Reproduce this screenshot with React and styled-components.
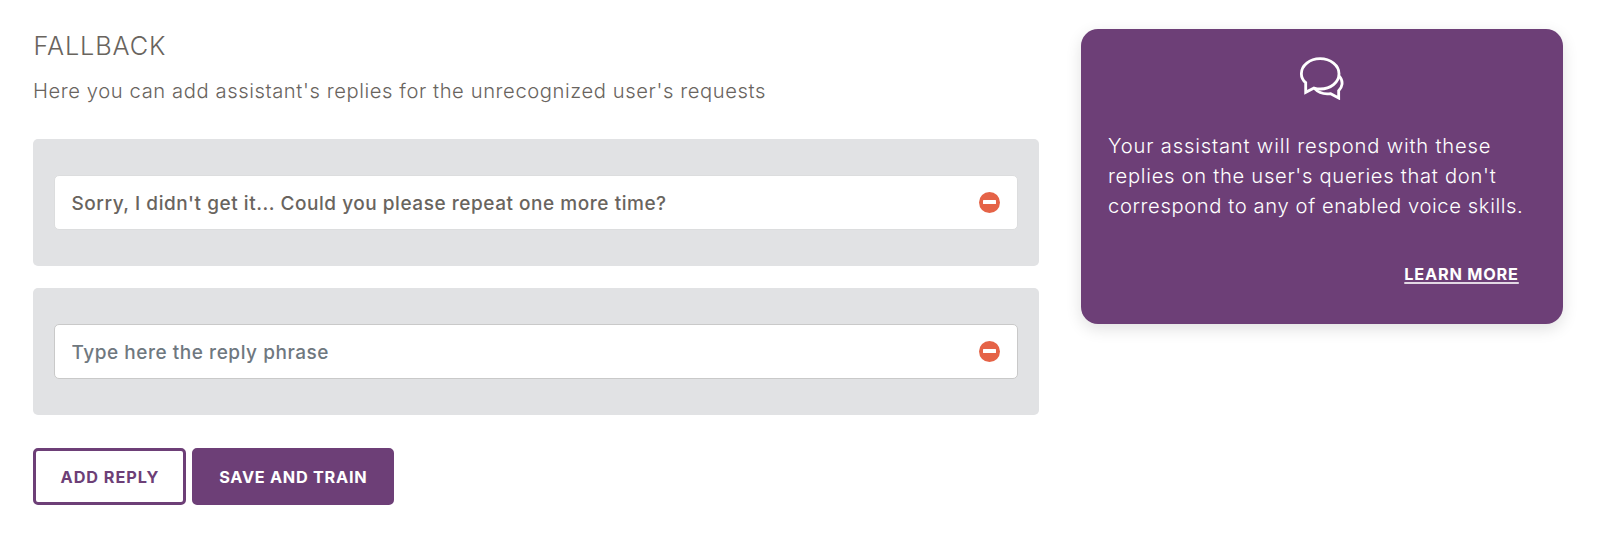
import React from 'react';
import styled, { createGlobalStyle } from 'styled-components';

const purple = '#6d3f77';

const GlobalStyle = createGlobalStyle`
  * { box-sizing: border-box; }
  body {
    margin: 0;
    background: #fff;
    color: #69645e;
    font-family: Inter, 'Open Sans', sans-serif;
  }
`;

const Page = styled.div`
  display: flex;
  align-items: flex-start;
  gap: 41.5px;
  width: 1600px;
  height: 535px;
  padding: 28.7px 37px 0 33px;
  overflow: hidden;
`;

const Main = styled.main`
  width: 1006px;
  padding-top: 2.3px;
`;

const Title = styled.h1`
  margin: 0 0 15px;
  padding-left: 0.5px;
  font-size: 25.3px;
  font-weight: 350;
  line-height: 30px;
  letter-spacing: 0.9px;
`;

const Subtitle = styled.p`
  margin: 0 0 33px;
  font-size: 20.2px;
  font-weight: 320;
  line-height: 30px;
  letter-spacing: 0.585px;
`;

const ReplyList = styled.div`
  display: flex;
  flex-direction: column;
  gap: 22px;
  margin-bottom: 33px;
`;

const ReplyPanel = styled.div`
  height: 127px;
  padding: 36px 21px;
  border-radius: 5px;
  background: #e1e2e4;
`;

const ReplyField = styled.div`
  display: flex;
  align-items: center;
  height: 55px;
  padding: 0 17px 0 16.5px;
  border: 1px solid ${(p) => (p.$outlined ? '#c9c9c9' : '#dcddde')};
  border-radius: 5px;
  background: #fff;
`;

const ReplyInput = styled.input`
  flex: 1;
  min-width: 0;
  height: 100%;
  padding: 2px 0 0;
  border: 0;
  outline: 0;
  background: transparent;
  color: #69645e;
  font: 500 19px Inter, 'Open Sans', sans-serif;
  letter-spacing: 0.54px;

  &::placeholder {
    color: #6f787f;
    opacity: 1;
  }
`;

const RemoveButton = styled.button`
  display: flex;
  align-items: center;
  justify-content: center;
  width: 21.5px;
  height: 21.5px;
  padding: 0;
  border: 0;
  border-radius: 50%;
  background: #e56347;

  &::before {
    content: '';
    width: 13px;
    height: 4px;
    border-radius: 0.5px;
    background: #fff;
  }
`;

const Actions = styled.div`
  display: flex;
  gap: 5.5px;
`;

const Button = styled.button`
  width: ${(p) => p.$width}px;
  height: 57px;
  padding: 1px 0 0 1px;
  border: 3px solid ${purple};
  border-radius: 5px;
  background: ${(p) => (p.$filled ? purple : '#fff')};
  color: ${(p) => (p.$filled ? '#fff' : purple)};
  font: 700 16.3px Inter, 'Open Sans', sans-serif;
  letter-spacing: ${(p) => p.$tracking}px;
  white-space: nowrap;
`;

const InfoCard = styled.aside`
  display: flex;
  flex-direction: column;
  width: 482.3px;
  height: 295.3px;
  padding: 28px 44px 0 27.5px;
  border-radius: 17px;
  background: ${purple};
  color: #fff;
  box-shadow: 0 5px 16px rgba(0, 0, 0, 0.12);
`;

const ChatIcon = styled.svg`
  display: block;
  width: 44.7px;
  height: 43.3px;
  margin: 0 0 30.6px 191.2px;
  fill: none;
  stroke: #fff;
  stroke-width: 8.5;
`;

const InfoText = styled.p`
  margin: 0;
  font-size: 20.2px;
  font-weight: 300;
  line-height: 30.3px;
  white-space: nowrap;
`;

const InfoLine = styled.span`
  display: block;
  letter-spacing: ${(p) => p.$tracking}px;
`;

const LearnMore = styled.a`
  align-self: flex-end;
  margin-top: 40.5px;
  color: #fff;
  font-size: 16.3px;
  font-weight: 700;
  line-height: 24px;
  letter-spacing: 0.8px;
  text-decoration: underline;
  text-decoration-thickness: 2px;
  text-decoration-color: rgba(255, 255, 255, 0.8);
  text-underline-offset: 2px;
  text-decoration-skip-ink: none;
`;

function Reply({ text, placeholder }) {
  return (
    <ReplyPanel>
      <ReplyField $outlined={!text}>
        <ReplyInput defaultValue={text} placeholder={placeholder} />
        <RemoveButton aria-label="Remove reply" />
      </ReplyField>
    </ReplyPanel>
  );
}

export default function App() {
  return (
    <>
      <GlobalStyle />
      <Page>
        <Main>
          <Title>FALLBACK</Title>
          <Subtitle>Here you can add assistant's replies for the unrecognized user's requests</Subtitle>
          <ReplyList>
            <Reply text="Sorry, I didn't get it... Could you please repeat one more time?" />
            <Reply placeholder="Type here the reply phrase" />
          </ReplyList>
          <Actions>
            <Button $width={153} $tracking={0.95}>ADD REPLY</Button>
            <Button $width={202.5} $tracking={0.72} $filled>SAVE AND TRAIN</Button>
          </Actions>
        </Main>
        <InfoCard>
          <ChatIcon viewBox="58 50 134 130">
            <path d="M78 156V127C69 119 65 110 65 100C65 75 90 55 121 55C153 55 178 75 178 100C178 126 153 146 122 146C115 146 109 145 103 143Z" />
            <path d="M178 107C186 115 188 124 187 132C186 141 181 147 177 151V173L153 160C132 163 117 158 105 145" />
          </ChatIcon>
          <InfoText>
            <InfoLine $tracking={0.82}>Your assistant will respond with these</InfoLine>
            <InfoLine $tracking={0.7}>replies on the user's queries that don't</InfoLine>
            <InfoLine $tracking={0.61}>correspond to any of enabled voice skills.</InfoLine>
          </InfoText>
          <LearnMore>LEARN MORE</LearnMore>
        </InfoCard>
      </Page>
    </>
  );
}
